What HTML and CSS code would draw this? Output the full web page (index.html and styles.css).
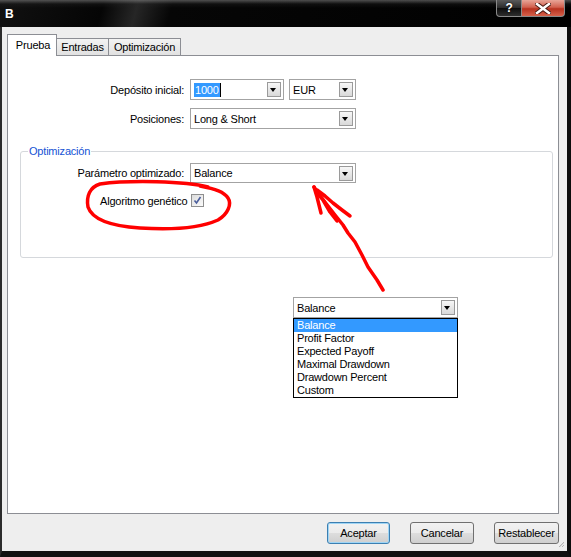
FILE: index.html
```html
<!DOCTYPE html>
<html lang="es">

<head>
    <meta charset="UTF-8">
    <title>B</title>
    <link rel="stylesheet" href="styles.css">
</head>

<body>
    <div class="window">
        <div class="titlebar">
            <span class="caption">B</span>
            <div class="caption-buttons">
                <div class="cap-help">?</div>
                <div class="cap-close">
                    <svg width="16" height="11" viewBox="0 0 16 11">
                        <path d="M2 1 L14 10 M14 1 L2 10" stroke="#4a1a14" stroke-width="4.5" stroke-linecap="square" />
                        <path d="M2 1 L14 10 M14 1 L2 10" stroke="#fff" stroke-width="2.5" stroke-linecap="square" />
                    </svg>
                </div>
            </div>
        </div>

        <div class="frame">
            <div class="tabs">
                <div class="tab active">Prueba</div>
                <div class="tab entries">Entradas</div>
                <div class="tab optim">Optimización</div>
            </div>

            <div class="panel">
                <div class="form">
                    <div class="label">Depósito inicial:</div>
                    <div class="field-pair">
                        <div class="combo deposit">
                            <span class="value"><span class="selected">1000</span><span class="caret"></span></span>
                            <span class="drop"></span>
                        </div>
                        <div class="combo currency">
                            <span class="value">EUR</span>
                            <span class="drop"></span>
                        </div>
                    </div>

                    <div class="label">Posiciones:</div>
                    <div class="combo wide">
                        <span class="value">Long &amp; Short</span>
                        <span class="drop"></span>
                    </div>
                </div>

                <fieldset class="group">
                    <legend>Optimización</legend>
                    <div class="form">
                        <div class="label">Parámetro optimizado:</div>
                        <div class="combo wide param">
                            <span class="value">Balance</span>
                            <span class="drop"></span>
                        </div>
                    </div>
                    <div class="check-row">
                        <span>Algoritmo genético</span>
                        <span class="checkbox">
                            <svg width="9" height="9" viewBox="0 0 9 9">
                                <path d="M1.5 4.5 L3.5 7 L7.5 1" fill="none" stroke="#4b5e9c" stroke-width="1.6" />
                            </svg>
                        </span>
                    </div>
                </fieldset>
            </div>

            <div class="buttons">
                <button class="default ok">Aceptar</button>
                <button class="cancel">Cancelar</button>
                <button class="reset">Restablecer</button>
                <span class="grip"></span>
            </div>
        </div>

        <!-- the opened list of the optimized parameter -->
        <div class="popup">
            <div class="combo">
                <span class="value">Balance</span>
                <span class="drop"></span>
            </div>
            <ul class="list">
                <li class="hl">Balance</li>
                <li>Profit Factor</li>
                <li>Expected Payoff</li>
                <li>Maximal Drawdown</li>
                <li>Drawdown Percent</li>
                <li>Custom</li>
            </ul>
        </div>

        <!-- red marker scribbles -->
        <svg class="marks" width="571" height="557" viewBox="0 0 571 557">
            <g fill="none" stroke="#f00" stroke-width="3.5" stroke-linecap="round" stroke-linejoin="round">
                <path d="M208 187 C185 181 130 180 100 184 C90 187 86 196 88 207 C92 219 110 226 140 228 C170 230 200 228 218 220 C228 214 232 204 228 198 C224 192 216 189 200 186" />
                <path d="M383 290 L377 280 L368 267 L362 255 L355 242 L348 233 L343 225 L335 215 L328 206 L318 193 L314 187" />
                <path d="M314 187 L317 197 L321 213" />
                <path d="M317 190 L325 196 L333 203 L342 210 L350 216" />
                <path d="M318 194 L323 200 L330 212 L337 221" />
            </g>
        </svg>
    </div>
</body>

</html>
```

FILE: styles.css
```css
body {
    margin: 0;
    background: #000;
    font-family: "Liberation Sans", Arial, sans-serif;
    font-size: 11px;
    letter-spacing: -0.2px;
    color: #000;
}

.window {
    position: relative;
    width: 571px;
    height: 557px;
    display: flex;
    flex-direction: column;
    overflow: hidden;
}

/* glass caption */
.titlebar {
    height: 27px;
    flex: none;
    display: flex;
    align-items: flex-start;
    background:
        linear-gradient(180deg, rgba(140, 140, 140, 0.55) 0, rgba(40, 40, 40, 0.3) 4px, rgba(0, 0, 0, 0) 8px),
        linear-gradient(105deg, #111 0%, #050505 18%, #262626 24%, #060606 30%, #000 100%);
}

.caption {
    color: #fff;
    font-weight: bold;
    font-size: 12px;
    margin: 7px 0 0 5px;
}

.caption-buttons {
    margin-left: auto;
    margin-right: 6px;
    display: flex;
}

.cap-help,
.cap-close {
    height: 17px;
    box-sizing: border-box;
    border: 1px solid #8a8a8a;
    border-top: none;
    display: flex;
    align-items: center;
    justify-content: center;
}

.cap-help {
    width: 26px;
    border-radius: 0 0 0 4px;
    background: linear-gradient(180deg, #5a5a5a 0, #2a2a2a 50%, #0c0c0c 51%, #2e2e2e 100%);
    color: #fff;
    font-weight: bold;
    font-size: 12px;
    text-shadow: 0 0 2px #000;
}

.cap-close {
    width: 43px;
    border-left: none;
    border-radius: 0 0 4px 0;
    background: linear-gradient(180deg, #e8a598 0, #d2614f 45%, #b8321f 55%, #d6604a 100%);
}

.frame {
    flex: 1;
    display: flex;
    flex-direction: column;
    background: #eeeeee;
    border-left: 2px solid #2b2b2b;
    border-right: 4px solid #0d0d0d;
    border-bottom: 6px solid #111;
    padding: 7px 0 0 5px;
}

/* tab strip */
.tabs {
    display: flex;
    align-items: flex-end;
    height: 21px;
    position: relative;
    z-index: 1;
}

.tab {
    height: 17px;
    box-sizing: border-box;
    border: 1px solid #8c8e94;
    border-bottom: none;
    background: linear-gradient(180deg, #f3f3f3, #e1e1e1);
    line-height: 17px;
    text-align: center;
    margin-left: -1px;
}

.tab.active {
    height: 22px;
    width: 50px;
    line-height: 20px;
    margin-left: 0;
    padding-left: 2px;
    background: #fff;
    margin-bottom: -1px;
    z-index: 2;
}

.tab.entries {
    width: 53px;
}

.tab.optim {
    width: 73px;
}

.panel {
    width: 552px;
    height: 459px;
    box-sizing: border-box;
    background: #fff;
    border: 1px solid #8c8e94;
    padding: 23px 0 0 0;
}

.form {
    display: grid;
    grid-template-columns: 176px 166px;
    column-gap: 6px;
    row-gap: 8px;
    align-items: center;
}

.label {
    text-align: right;
}

.field-pair {
    display: flex;
    gap: 5px;
}

.combo {
    display: flex;
    align-items: center;
    height: 21px;
    box-sizing: border-box;
    border: 1px solid #a3a3a3;
    background: #fff;
    padding: 0 1px 0 3px;
}

.combo.deposit {
    width: 94px;
}

.combo.currency {
    width: 67px;
}

.combo.param {
    height: 20px;
}

.value {
    display: flex;
    align-items: center;
    white-space: nowrap;
}

.selected {
    background: #3399ff;
    color: #fff;
    padding: 0 1px;
    line-height: 14px;
}

.caret {
    width: 1px;
    height: 14px;
    background: #000;
}

.drop {
    position: relative;
    margin-left: auto;
    margin-right: 1px;
    width: 14px;
    height: 15px;
    box-sizing: border-box;
    border: 1px solid #9a9a9a;
    background: linear-gradient(180deg, #f7f7f7, #d9d9d9);
}

.drop::after {
    content: "";
    position: absolute;
    left: 2px;
    top: 5px;
    border-top: 4px solid #000;
    border-left: 3.5px solid transparent;
    border-right: 3.5px solid transparent;
}

/* options group */
.group {
    margin: 16px 0 0 12px;
    width: 533px;
    height: 113px;
    box-sizing: border-box;
    border: 1px solid #d5d8dc;
    border-radius: 3px;
    padding: 6px 0 0 0;
}

.group legend {
    color: #1553d4;
    padding: 0 1px;
    margin-left: 7px;
}

.group .form {
    margin-left: -13px;
}

.check-row {
    display: flex;
    align-items: center;
    gap: 3px;
    margin: 11px 0 0 79px;
}

.checkbox {
    width: 13px;
    height: 13px;
    box-sizing: border-box;
    border: 1px solid #8f8f8f;
    background: linear-gradient(135deg, #dcdcdc, #fbfbfb);
    display: flex;
    align-items: center;
    justify-content: center;
}

/* dialog buttons */
.buttons {
    position: relative;
    display: flex;
    gap: 20px;
    justify-content: flex-end;
    width: 552px;
    margin-top: 8px;
}

.buttons button {
    height: 22px;
    padding: 0;
    border: 1px solid #707070;
    border-radius: 3px;
    background: linear-gradient(180deg, #f2f2f2 0, #ebebeb 50%, #dddddd 51%, #cfcfcf 100%);
    font-family: inherit;
    font-size: 11px;
    letter-spacing: -0.2px;
    color: #000;
}

.buttons .ok {
    width: 63px;
}

.buttons .cancel {
    width: 64px;
}

.buttons .reset {
    width: 65px;
}

.buttons button.default {
    border-color: #3c7fb1;
    box-shadow: inset 0 0 0 1px #9fd5f5;
}

.grip {
    position: absolute;
    right: -5px;
    top: 19px;
    width: 6px;
    height: 6px;
    background: linear-gradient(135deg, transparent 55%, #b5b5b5 56%, #b5b5b5 66%, transparent 67%, transparent 77%, #b5b5b5 78%, #b5b5b5 88%, transparent 89%);
}

/* dropped-down list */
.popup {
    position: absolute;
    left: 293px;
    top: 297px;
    width: 165px;
}

.popup .combo {
    height: 21px;
}

.list {
    list-style: none;
    margin: 0;
    padding: 0;
    border: 1px solid #000;
    background: #fff;
}

.list li {
    height: 13px;
    line-height: 13px;
    padding-left: 3px;
}

.list li.hl {
    background: #3399ff;
    color: #fff;
}

.marks {
    position: absolute;
    left: 0;
    top: 0;
    pointer-events: none;
}
```
